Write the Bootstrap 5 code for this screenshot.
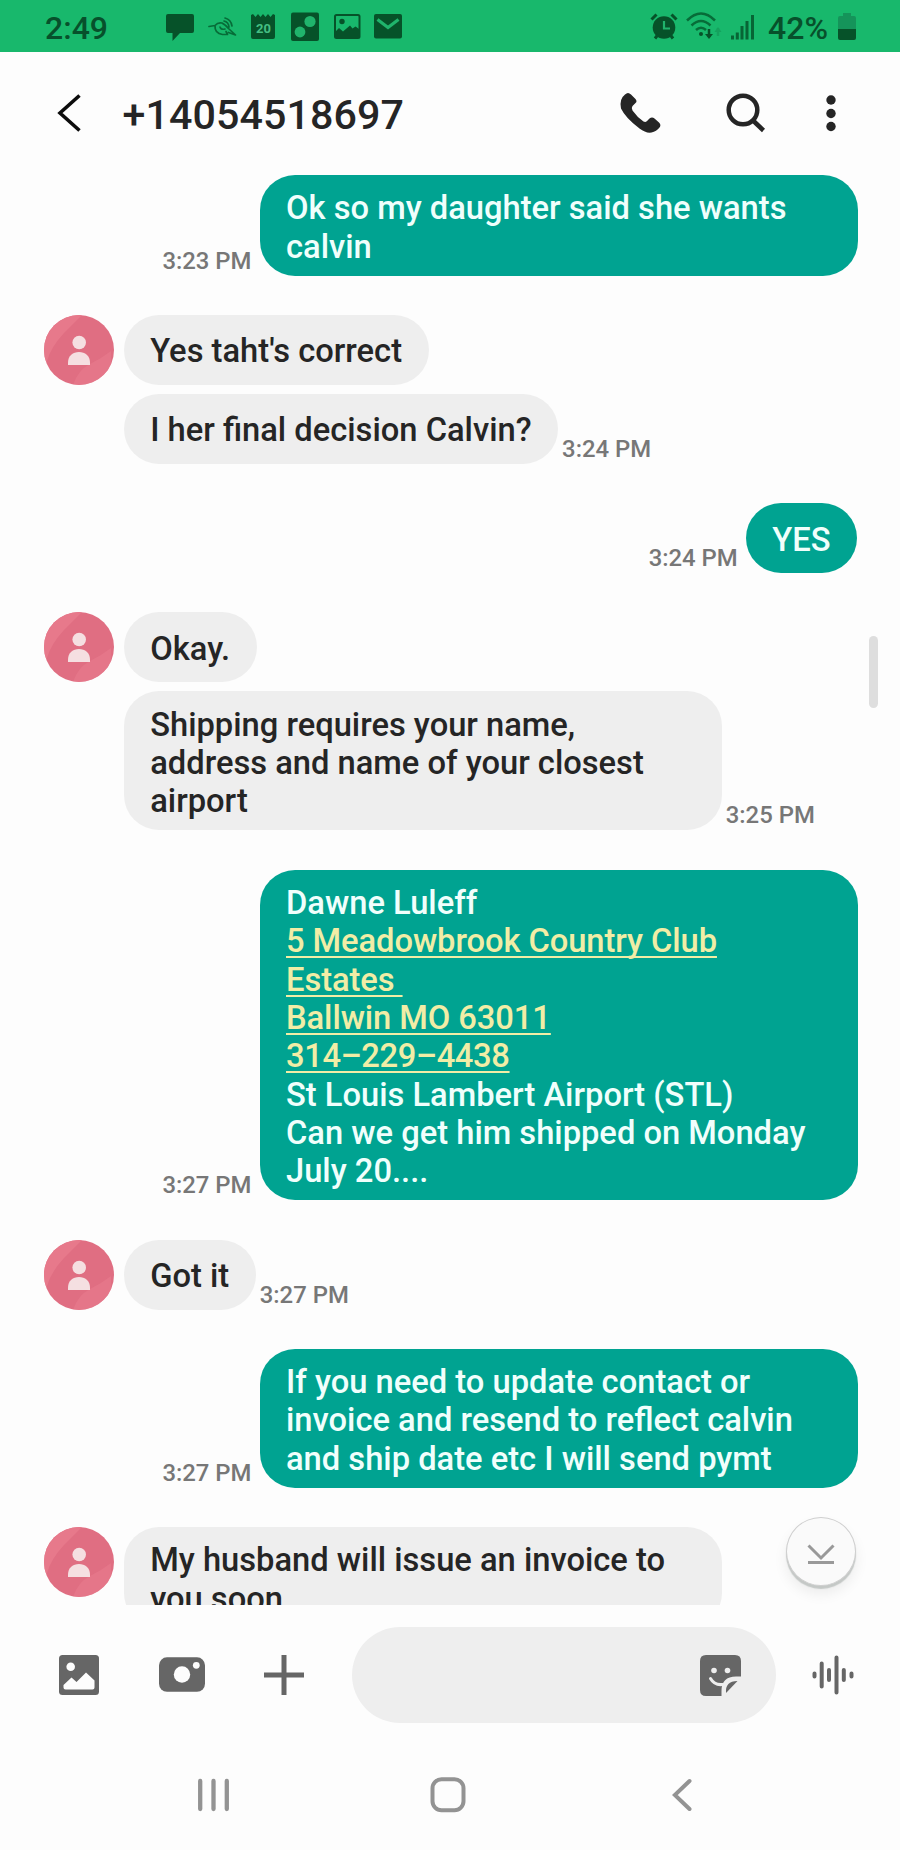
<!DOCTYPE html>
<html lang="en">
<head>
<meta charset="utf-8">
<meta name="viewport" content="width=device-width, initial-scale=1">
<title>Messages</title>
<link href="https://cdn.jsdelivr.net/npm/bootstrap@5.3.0/dist/css/bootstrap.min.css" rel="stylesheet">
<style>
  body { font-family: Roboto, "Liberation Sans", sans-serif; font-weight: 500; background: #fdfdfd; color: #252525; }
  svg { display: block; flex: none; }
  .screen { width: 900px; height: 1850px; }
  .status { height: 52px; background: #18b86c; color: #07502b; padding: 2px 44px 0 45px; font-size: 32px; line-height: 50px; }
  .status .label-text { padding-top: 1px; }
  .status-icons { gap: 11.7px; margin-left: 57px; }
  .topbar { height: 108px; padding: 14px 47px 0 54px; }
  .peer { font-size: 41.2px; line-height: 48px; letter-spacing: .1px; margin: 4px 0 0 34.500px; font-weight: 500; }
  .btn-search { margin-left: 60px; }
  .btn-more { margin-left: 42px; }
  .thread { height: 1445px; padding: 15px 43px 0 44px; gap: 39.25px; }
  .burst { gap: 9px; padding-left: 79.7px; }
  .bubble { font-size: 32.7px; line-height: 38.33px; padding: 14.2px 26.5px 9.8px 26.500px; border-radius: 35px; max-width: 598px; flex: none; }
  .bubble.single { padding-top: 17.5px; padding-bottom: 14.2px; }
  .sent { background: #00a391; color: #f0fffc; }
  .sent.wide { margin-right: -.5px; }
  .wide { width: 598px; }
  .received { background: #eee; }
  .sent a { color: #f1eda6; text-decoration: underline; text-decoration-thickness: 2px; text-underline-offset: 3.5px; text-decoration-skip-ink: none; white-space: pre; letter-spacing: -.07px; }
  .sent a.tel { letter-spacing: -.35px; }
  .stamp { font-size: 23.9px; line-height: 28px; color: #777; margin-bottom: 1px; white-space: nowrap; }
  .avatar { left: 0; top: 0; }
  .thumb { left: 869px; top: 476px; width: 9px; height: 72px; background: #dedede; }
  .to-latest { left: 786px; top: 1357px; width: 70px; height: 69px; background: #fafafa; border: 1.5px solid #cfcfcf; box-shadow: 0 3px 1px #c4c8c6, 0 8px 14px rgba(0,0,0,.07); }
  .composer { height: 140px; padding: 0 46px 0 59px; }
  .field { width: 424px; height: 96px; border-radius: 48px; background: #eee; padding-right: 35px; margin-left: 48px; }
  .sysnav { height: 100px; padding: 0 208px 0 197px; }
</style>
</head>
<body>
<svg width="0" height="0" class="position-absolute">
  <defs>
    <clipPath id="disc"><circle cx="35" cy="35" r="35"/></clipPath>
    <symbol id="person" viewBox="0 0 70 70">
      <g clip-path="url(#disc)">
        <path fill="#e06e82" d="M0 0h70v70H0z"/>
        <path fill="#e7798b" d="M0 0h38Q26 12 20 18 7 32 3 46L0 50z"/>
        <path fill="#e7798b" d="M29 70Q34 55 46 49T67 36v34z" opacity=".7"/>
      </g>
      <circle cx="35.2" cy="27.5" r="6.8" fill="#f5dfe1"/>
      <path fill="#f5dfe1" d="M24 50v-2.500C24 41 29 37 35 37s11 4 11 10.500V50z"/>
    </symbol>
  </defs>
</svg>
<div class="screen d-flex flex-column overflow-hidden">
  <div class="status d-flex align-items-center">
    <span class="label-text">2:49</span>
    <div class="status-icons d-flex align-items-center" aria-hidden="true">
      <svg width="30" height="30" viewBox="0 0 30 30" fill="#065229"><path d="M3 2h24q2 0 2 2v15q0 2-2 2H15L7.500 29v-8H3q-2 0-2-2V4q0-2 2-2z"/></svg>
      <svg width="30" height="30" viewBox="0 0 30 30" fill="none" stroke="#076c38" stroke-width="1.700" stroke-linecap="round" stroke-linejoin="round"><path d="M2 14.500l6-1q3-3.500 7-2.500 5 3 6.500 5.500l7 6.500-7-2.500M8 13.500q-.5 8 7.500 9h5l-1.500-3M13 15q1 3 5 2M17 9q4.500 1 5 6M18 6q6 1.500 7 8"/></svg>
      <svg width="30" height="30" viewBox="0 0 30 30"><path fill="#065229" d="M3 3l2-1 2.500 3L10 2l2.500 3L15 2l2.500 3L20 2l2.500 3L25 2l2 1v22q0 2-2 2H5q-2 0-2-2z"/><text x="15.500" y="20.500" fill="#45bf83" font-family="Roboto" font-size="13" font-weight="700" text-anchor="middle">20</text></svg>
      <svg width="30" height="30" viewBox="0 0 30 30"><rect x="1" y=".5" width="28" height="28.500" rx="2" fill="#065229"/><circle cx="20" cy="9.500" r="5.600" fill="#20b46c"/><circle cx="10" cy="20" r="5.400" fill="#20b46c"/></svg>
      <svg width="30" height="30" viewBox="0 0 30 30"><rect x="3" y="3" width="24.500" height="23" rx="1.500" fill="none" stroke="#065229" stroke-width="2"/><path fill="#065229" d="M4 19l3-3 4 3.500 7-6 2.500 3 3-2 3.500 2.500v8H4z"/><circle cx="10" cy="9.500" r="2.700" fill="#065229"/></svg>
      <svg width="30" height="30" viewBox="0 0 30 30"><rect x="1" y="2" width="28" height="24.500" rx="2" fill="#065229"/><path d="M4.500 7.500 15 15.500l10.500-8" fill="none" stroke="#20b46c" stroke-width="3.200"/></svg>
    </div>
    <div class="d-flex align-items-center ms-auto" aria-hidden="true">
      <svg width="28" height="30" viewBox="0 0 28 30"><circle cx="14" cy="15.500" r="11.300" fill="#065229"/><path d="M1.500 7.500 6.500 2.500M26.500 7.500l-5-5" stroke="#065229" stroke-width="3"/><path d="M5 26.500l3-4M23 26.500l-3-4" stroke="#065229" stroke-width="3"/><path d="M14 9v7.500h6" stroke="#20b46c" stroke-width="2.200" fill="none"/></svg>
      <svg class="ms-2" width="36" height="30" viewBox="0 0 36 30" fill="none" stroke="#076c38" stroke-width="2.500"><path d="M1 8.500q14-14 28 0M5.500 13.500q9.500-9 19 0M10 18q5-4.500 10 0"/><circle cx="15" cy="22" r="2" fill="#065229" stroke="none"/><path d="M23 17v8" stroke="#065229"/><path d="M19 22l4 5 4-5z" fill="#065229" stroke="none"/><path d="M32 16v8" stroke="#15a25e"/><path d="M28.500 20l3.500-5 3.500 5z" fill="#15a25e" stroke="none"/></svg>
      <svg width="26" height="30" viewBox="0 0 26 30" stroke="#076535" stroke-width="3" class="ms-2"><path d="M2.500 23.500v4M7.300 20.500v7M12 14v13.500M17 9v18.500M22.500 3v24.500"/></svg>
    </div>
    <span class="label-text" style="margin-left:12px">42%</span>
    <svg width="18" height="28" viewBox="0 0 18 28" style="margin-left:10px"><path fill="#15945a" d="M5 0h8v3H5zM2 3h14q2 0 2 2v11H0V5q0-2 2-2z"/><path fill="#065229" d="M0 16h18v9q0 2-2 2H2q-2 0-2-2z"/></svg>
  </div>

  <header class="topbar d-flex align-items-center">
    <svg width="34" height="44" viewBox="0 0 34 44"><path d="M25.500 4.500 6 22l19.500 17.500" fill="none" stroke="#0c0c0c" stroke-width="3.600"/></svg>
    <h1 class="peer mb-0">+14054518697</h1>
    <div class="d-flex align-items-center ms-auto">
      <svg width="44" height="44" viewBox="0 0 44 44"><path fill="#252525" d="M6 3.500q3-3 6 0l4.500 4.500q2 2.500 0 4l-3 3q-1.500 2 0 4.500Q18 26 24.500 30.500q2 1.200 3.500-.5l2.500-2.500q2.500-2 5 0l4.500 4q2.500 2.500.5 5-3 4-8 5-5.500 1-12-4Q6.500 27 2 17.500 0 8 6 3.500z"/></svg>
      <svg class="btn-search" width="44" height="44" viewBox="0 0 44 44" fill="none" stroke="#252525" stroke-width="4.500"><circle cx="20" cy="19" r="14.300"/><path d="M30 29.500l10.500 10"/></svg>
      <svg class="btn-more" width="44" height="44" viewBox="0 0 44 44" fill="#252525"><circle cx="22" cy="9" r="4.700"/><circle cx="22" cy="22.500" r="4.700"/><circle cx="22" cy="35.500" r="4.700"/></svg>
    </div>
  </header>

  <main class="position-relative flex-shrink-0">
    <div class="thread d-flex flex-column overflow-hidden">
      <div class="d-flex justify-content-end align-items-end gap-2"><span class="stamp">3:23 PM</span><div class="bubble sent wide">Ok so my daughter said she wants<br>calvin</div></div>

      <div class="burst position-relative d-flex flex-column">
        <svg class="avatar position-absolute" width="70" height="70"><use href="#person"/></svg>
        <div class="d-flex"><div class="bubble single received">Yes taht's correct</div></div>
        <div class="d-flex align-items-end gap-1"><div class="bubble single received">I her final decision Calvin?</div><span class="stamp">3:24 PM</span></div>
      </div>

      <div class="d-flex justify-content-end align-items-end gap-2"><span class="stamp">3:24 PM</span><div class="bubble single sent">YES</div></div>

      <div class="burst position-relative d-flex flex-column">
        <svg class="avatar position-absolute" width="70" height="70"><use href="#person"/></svg>
        <div class="d-flex"><div class="bubble single received">Okay.</div></div>
        <div class="d-flex align-items-end gap-1"><div class="bubble received wide">Shipping requires your name,<br>address and name of your closest<br>airport</div><span class="stamp">3:25 PM</span></div>
      </div>

      <div class="d-flex justify-content-end align-items-end gap-2"><span class="stamp">3:27 PM</span><div class="bubble sent wide">Dawne Luleff<br><a href="#">5 Meadowbrook Country Club</a><br><a href="#">Estates </a><br><a href="#">Ballwin MO 63011</a><br><a class="tel" href="#">314–229–4438</a><br>St Louis Lambert Airport (STL)<br>Can we get him shipped on Monday<br>July 20....</div></div>

      <div class="burst position-relative d-flex flex-column">
        <svg class="avatar position-absolute" width="70" height="70"><use href="#person"/></svg>
        <div class="d-flex align-items-end gap-1"><div class="bubble single received">Got it</div><span class="stamp">3:27 PM</span></div>
      </div>

      <div class="d-flex justify-content-end align-items-end gap-2"><span class="stamp">3:27 PM</span><div class="bubble sent wide">If you need to update contact or<br>invoice and resend to reflect calvin<br>and ship date etc I will send pymt</div></div>

      <div class="burst position-relative d-flex flex-column">
        <svg class="avatar position-absolute" width="70" height="70"><use href="#person"/></svg>
        <div class="d-flex"><div class="bubble received wide">My husband will issue an invoice to<br>you soon</div></div>
      </div>
    </div>
    <div class="thumb position-absolute rounded-pill"></div>
    <button type="button" aria-label="Latest messages" class="to-latest position-absolute rounded-circle p-0 d-flex justify-content-center align-items-center">
      <svg width="28" height="24" viewBox="0 0 28 24" fill="none" stroke="#999" stroke-width="3" class="mt-2"><path d="M1.500 1.500 14 14 26.500 1.500M1 18.500h26"/></svg>
    </button>
  </main>

  <div class="composer d-flex align-items-center flex-shrink-0">
    <svg width="40" height="40" viewBox="0 0 40 40"><rect width="40" height="40" rx="3.500" fill="#666"/><circle cx="11.700" cy="11.700" r="4.300" fill="#fdfdfd"/><path fill="#fdfdfd" d="M4.500 30l8-7.500 5 4.500 9.500-9.500 8.500 8v7q0 2-2 2H6.500q-2 0-2-2z"/></svg>
    <svg width="46" height="40" viewBox="0 0 46 40" style="margin-left:60px"><rect y="2.300" width="46" height="34.500" rx="8" fill="#666"/><circle cx="23" cy="19.500" r="8.200" fill="#fdfdfd"/><circle cx="37.300" cy="10.300" r="3.400" fill="#fdfdfd"/></svg>
    <svg width="40" height="40" viewBox="0 0 40 40" style="margin-left:59px"><path d="M20 0v40M0 20h40" stroke="#666" stroke-width="5"/></svg>
    <div class="field d-flex align-items-center justify-content-end">
      <svg width="41" height="41" viewBox="0 0 41 41"><path fill="#666" d="M6 0h29q6 0 6 6v15.500h-5q-14.500 0-14.500 14.500v5H6q-6 0-6-6V6q0-6 6-6z"/><path fill="#666" d="M26 38q-1-12 11.500-12z"/><circle cx="14" cy="15.500" r="2.800" fill="#eee"/><circle cx="27.500" cy="15.500" r="2.800" fill="#eee"/><path d="M10.500 23.500q4 7 12 6" stroke="#eee" stroke-width="3" stroke-linecap="round" fill="none"/></svg>
    </div>
    <svg class="ms-auto" width="42" height="40" viewBox="0 0 42 40" stroke="#666" stroke-width="4" stroke-linecap="round"><path d="M2.500 18.500v3M9.700 8.500v23M17 15v10M24.500 2.500v35M31.800 15v10M39.500 18.500v3"/></svg>
  </div>

  <nav class="sysnav d-flex align-items-center justify-content-between flex-shrink-0">
    <svg width="33" height="36" viewBox="0 0 33 36" stroke="#939393" stroke-width="4.300" stroke-linecap="round"><path d="M3.200 4v28M16.500 4v28M29.800 4v28"/></svg>
    <svg width="36" height="36" viewBox="0 0 36 36" style="margin-right:6px"><rect x="2.500" y="2.300" width="31" height="31" rx="9" fill="none" stroke="#939393" stroke-width="4"/></svg>
    <svg width="20" height="36" viewBox="0 0 20 36" fill="none" stroke="#939393" stroke-width="4" stroke-linecap="round"><path d="M17.500 4 2.800 18l14.700 14"/></svg>
  </nav>
</div>
<script src="https://cdn.jsdelivr.net/npm/bootstrap@5.3.0/dist/js/bootstrap.bundle.min.js"></script>
</body>
</html>
